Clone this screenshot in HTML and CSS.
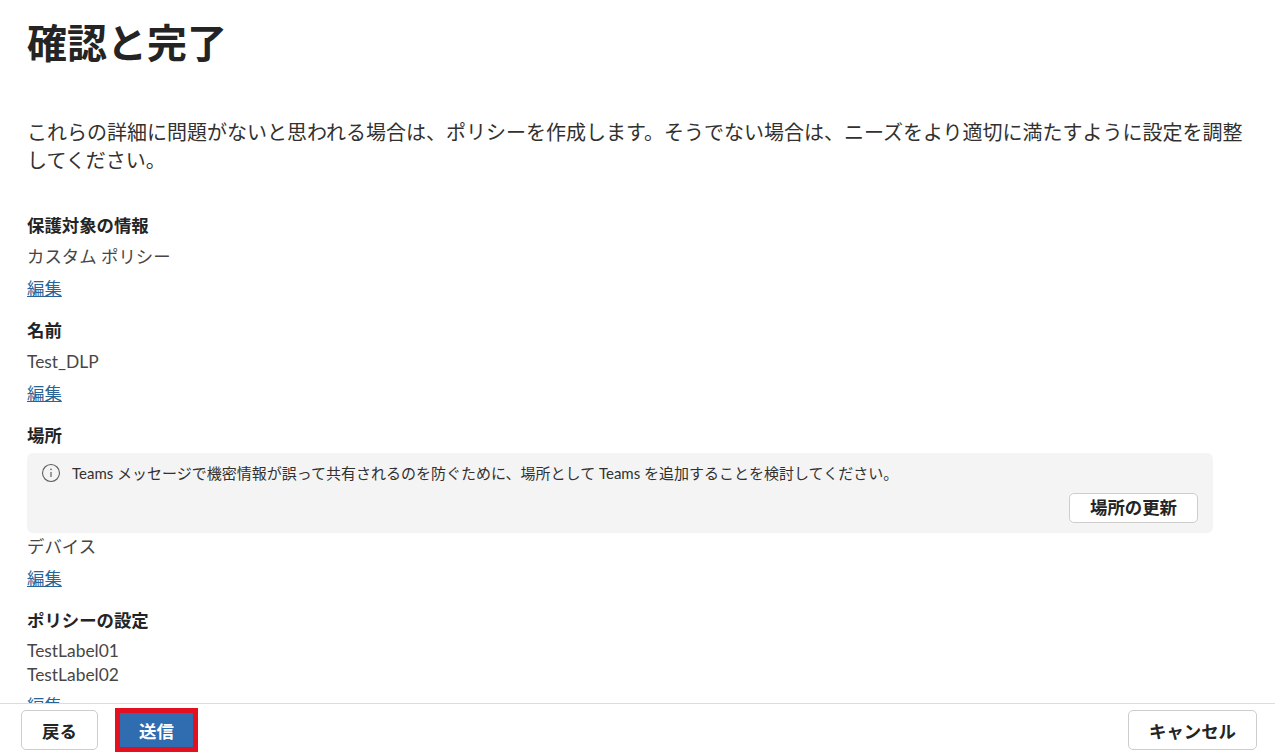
FILE: index.html
```html
<!DOCTYPE html>
<html lang="ja">

<head>
    <meta charset="UTF-8">
    <meta name="viewport" content="width=device-width, initial-scale=1.0">
    <title>確認と完了</title>
    <link rel="stylesheet" href="styles.css">
</head>

<body>
    <main class="content">
        <h1>確認と完了</h1>
        <p class="intro">これらの詳細に問題がないと思われる場合は、ポリシーを作成します。そうでない場合は、ニーズをより適切に満たすように設定を調整してください。</p>

        <section class="group">
            <h2>保護対象の情報</h2>
            <div class="value">カスタム ポリシー</div>
            <a class="edit" href="#">編集</a>
        </section>

        <section class="group">
            <h2>名前</h2>
            <div class="value">Test_DLP</div>
            <a class="edit" href="#">編集</a>
        </section>

        <section class="group">
            <h2>場所</h2>
            <div class="notice">
                <div class="notice-text">
                    <svg class="info-icon" width="20" height="20" viewBox="0 0 20 20" fill="none" stroke="#605e5c">
                        <circle cx="10" cy="10" r="8.5" stroke-width="1.1" />
                        <path d="M10 9v5" stroke-width="1.2" />
                        <circle cx="10" cy="6.4" r="0.8" fill="#605e5c" stroke="none" />
                    </svg>
                    <span>Teams メッセージで機密情報が誤って共有されるのを防ぐために、場所として Teams を追加することを検討してください。</span>
                </div>
                <div class="notice-actions">
                    <button class="btn btn-small">場所の更新</button>
                </div>
            </div>
            <div class="value">デバイス</div>
            <a class="edit" href="#">編集</a>
        </section>

        <section class="group">
            <h2>ポリシーの設定</h2>
            <div class="value tight">TestLabel01</div>
            <div class="value tight">TestLabel02</div>
            <a class="edit" href="#">編集</a>
        </section>
    </main>

    <footer class="footer">
        <button class="btn">戻る</button>
        <button class="btn btn-primary">送信</button>
        <button class="btn btn-cancel">キャンセル</button>
    </footer>
</body>

</html>
```

FILE: styles.css
```css
* {
    box-sizing: border-box;
}

body {
    font-family: Lato, "Noto Sans CJK JP", sans-serif;
    display: flex;
    flex-direction: column;
    height: 100vh;
    margin: 0;
    background: #fff;
    color: #323130;
    overflow: hidden;
}

.content {
    flex: 1;
    min-height: 0;
    overflow: hidden;
    padding: 14px 27px 0;
}

h1 {
    margin: 0;
    font-size: 40px;
    line-height: 58px;
    font-weight: 700;
    color: #242424;
}

.intro {
    margin: 46px 0 0;
    font-size: 20px;
    line-height: 28px;
}

.group {
    margin-top: 39px;
}

.group + .group {
    margin-top: 16px;
}

h2 {
    margin: 0;
    font-size: 17.4px;
    line-height: 26px;
    font-weight: 700;
    color: #242424;
}

.value {
    font-size: 17.4px;
    line-height: 26px;
    margin-top: 5px;
    color: #484644;
}

.notice + .value {
    margin-top: 1px;
}

.value.tight {
    line-height: 24px;
    margin-top: 0;
}

h2 + .value.tight {
    margin-top: 5px;
}

.edit {
    display: block;
    width: fit-content;
    margin-top: 6px;
    font-size: 17.4px;
    line-height: 26px;
    color: #2a6496;
}

.notice {
    width: 1186px;
    height: 80px;
    margin-top: 4px;
    padding: 10px 15px 10px 14px;
    background: #f4f4f4;
    border-radius: 6px;
}

.notice-text {
    display: flex;
    align-items: center;
    gap: 11px;
    font-size: 15px;
    line-height: 20px;
    color: #323130;
}

.notice-actions {
    display: flex;
    justify-content: flex-end;
    margin-top: 10px;
}

.btn {
    font-family: inherit;
    width: 77px;
    height: 40px;
    padding: 0;
    background: #fff;
    border: 1px solid #cfcdcb;
    border-radius: 5px;
    font-size: 17.4px;
    font-weight: 700;
    color: #242424;
}

.btn-small {
    width: 129px;
    height: 30px;
    line-height: 26px;
}

.btn-primary {
    width: 83px;
    height: 44px;
    margin-left: 17px;
    background: #2f6cb0;
    border: 5px solid #e3101f;
    border-radius: 0;
    color: #fff;
}

.btn-cancel {
    width: 129px;
    margin-left: auto;
}

.footer {
    flex: none;
    display: flex;
    align-items: center;
    height: 51px;
    padding: 2px 18px 0 21px;
    border-top: 1px solid #dcdcdc;
}
```
